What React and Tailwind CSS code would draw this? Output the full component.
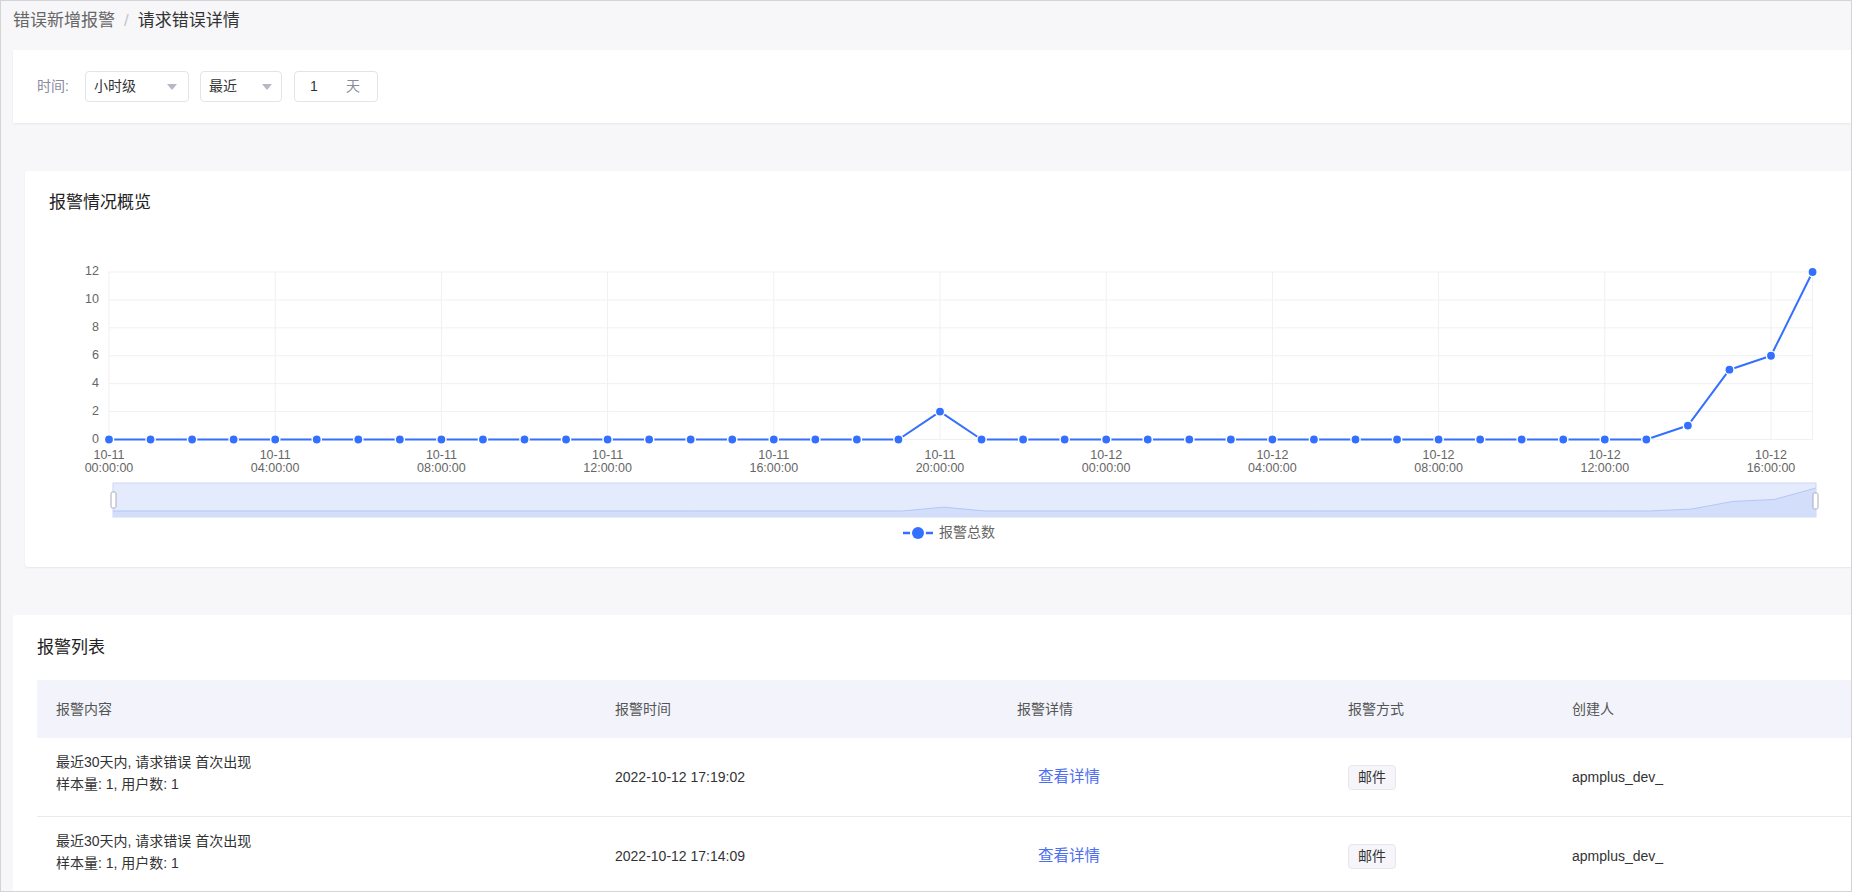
import React from 'react';

// 每小时报警数 (10-11 00:00 ~ 10-12 17:00)
const values = [
  ...Array(20).fill(0), 2,
  ...Array(17).fill(0), 1, 5, 6, 12,
];

const X0 = 84;
const STEP = 41.55;
const Y0 = 204.5;
const UNIT = 13.96;
const px = (i) => X0 + i * STEP;
const py = (v) => Y0 - v * UNIT;
const X1 = px(values.length - 1);

const pad = (n) => String(n).padStart(2, '0');

const Arrow = () => (
  <svg width="10" height="6" viewBox="0 0 10 6">
    <path d="M0 0 L10 0 L5 6 Z" fill="#b7b7c6" />
  </svg>
);

const Filters = () => (
  <div className="ml-[12px] h-[73px] bg-white shadow-[0_1px_2px_rgba(0,0,0,0.07)] flex items-center pl-[24px] text-[14px]">
    <span className="w-[48px] text-[#8a8a9c]">时间:</span>
    <div className="w-[104px] h-[31px] border border-[#e3e3ec] rounded-[4px] flex items-center justify-between pl-[8px] pr-[11px] text-[#333]">
      <span>小时级</span>
      <Arrow />
    </div>
    <div className="ml-[11px] w-[82px] h-[31px] border border-[#e3e3ec] rounded-[4px] flex items-center justify-between pl-[8px] pr-[9px] text-[#333]">
      <span>最近</span>
      <Arrow />
    </div>
    <div className="ml-[12px] w-[84px] h-[31px] border border-[#e3e3ec] rounded-[4px] flex items-center pl-[15px] text-[#333]">
      <span className="w-[36px]">1</span>
      <span className="text-[#8a8a9c]">天</span>
    </div>
  </div>
);

const Chart = () => {
  const line = values.map((v, i) => `${i ? 'L' : 'M'}${px(i)} ${py(v)}`).join(' ');
  // 缩略区域
  const zx0 = 88, zx1 = 1791, zy0 = 248, zy1 = 282, zBase = 276, zUnit = 1.92;
  const zStep = (zx1 - zx0) / (values.length - 1);
  const zLine = values.map((v, i) => `${i ? 'L' : 'M'}${zx0 + i * zStep} ${zBase - v * zUnit}`).join(' ');
  const zArea = `${zLine} L${zx1} ${zy1} L${zx0} ${zy1} Z`;
  const font = 'Liberation Sans, Noto Sans CJK SC, sans-serif';

  return (
    <svg width="1826" height="332" viewBox="0 0 1826 332" fontFamily={font}>
      {/* 网格 */}
      {[0, 2, 4, 6, 8, 10, 12].map((v) => (
        <g key={v}>
          <line x1={X0} y1={py(v)} x2={X1} y2={py(v)} stroke="#f0f0f3" strokeWidth="1" />
          <text x="74" y={py(v)} textAnchor="end" dominantBaseline="middle" fontSize="12.5" fill="#666">{v}</text>
        </g>
      ))}
      {Array.from({ length: 11 }).map((_, k) => {
        const h = k * 4;
        const x = px(h);
        return (
          <g key={k}>
            <line x1={x} y1={py(12)} x2={x} y2={Y0} stroke="#f0f0f3" strokeWidth="1" />
            <text x={x} y="221" textAnchor="middle" dominantBaseline="middle" fontSize="12.5" fill="#666">{h < 24 ? '10-11' : '10-12'}</text>
            <text x={x} y="234" textAnchor="middle" dominantBaseline="middle" fontSize="12.5" fill="#666">{`${pad(h % 24)}:00:00`}</text>
          </g>
        );
      })}
      <line x1={X1} y1={py(12)} x2={X1} y2={Y0} stroke="#f0f0f3" strokeWidth="1" />

      {/* 折线 */}
      <path d={line} fill="none" stroke="#3370ff" strokeWidth="2" strokeLinejoin="round" />
      {values.map((v, i) => (
        <circle key={i} cx={px(i)} cy={py(v)} r="4.6" fill="#3370ff" stroke="#fff" strokeWidth="1.4" />
      ))}

      {/* dataZoom */}
      <rect x={zx0} y={zy0} width={zx1 - zx0} height={zy1 - zy0} fill="#e4ebfc" stroke="#cbd7f6" strokeWidth="1" />
      <path d={zArea} fill="#d3defa" />
      <path d={zLine} fill="none" stroke="#b3c7f5" strokeWidth="1" />
      <rect x="86" y="257" width="5" height="16" rx="1.5" fill="#fff" stroke="#a6acc2" strokeWidth="1" />
      <rect x="1788" y="258" width="5" height="16" rx="1.5" fill="#fff" stroke="#a6acc2" strokeWidth="1" />

      {/* 图例 */}
      <line x1="878" y1="298" x2="908" y2="298" stroke="#3370ff" strokeWidth="2.5" />
      <circle cx="893" cy="298" r="8" fill="#fff" />
      <circle cx="893" cy="298" r="6" fill="#3370ff" />
      <text x="914" y="298" dominantBaseline="middle" fontSize="14" fill="#666">报警总数</text>
    </svg>
  );
};

const rows = [
  { time: '2022-10-12 17:19:02' },
  { time: '2022-10-12 17:14:09' },
];

const cols = 'grid grid-cols-[559px_402px_331px_224px_1fr]';

const AlarmTable = () => (
  <div className="ml-[24px]">
    <div className={`${cols} h-[58px] bg-[#f3f4fb] items-center text-[14px] text-[#555]`}>
      <div className="pl-[19px]">报警内容</div>
      <div className="pl-[19px]">报警时间</div>
      <div className="pl-[19px]">报警详情</div>
      <div className="pl-[19px]">报警方式</div>
      <div className="pl-[19px]">创建人</div>
    </div>
    {rows.map((r, i) => (
      <div key={i} className={`${cols} h-[79px] items-center border-b border-[#e9e9ef] text-[14px] text-[#333]`}>
        <div className="pl-[19px] pb-[8px] leading-[22px]">
          <div>最近30天内, 请求错误 首次出现</div>
          <div>样本量: 1, 用户数: 1</div>
        </div>
        <div className="pl-[19px]">{r.time}</div>
        <div className="pl-[40px] text-[15.5px] text-[#4e6ef2]">查看详情</div>
        <div className="pl-[19px]">
          <span className="inline-flex items-center h-[25px] px-[9px] border border-[#e6e6ef] bg-[#f6f6fa] rounded-[4px] text-[14px]">邮件</span>
        </div>
        <div className="pl-[19px]">apmplus_dev_</div>
      </div>
    ))}
  </div>
);

export default function App() {
  return (
    <div className="w-[1852px] h-[892px] overflow-hidden border border-[#d4d4d8] bg-[#f7f7fa] font-['Liberation_Sans','Noto_Sans_CJK_SC',sans-serif]">
      <div className="h-[49px] pt-[8px] pl-[12px] text-[17px] leading-[24px] flex items-start">
        <span className="text-[#666]">错误新增报警</span>
        <span className="mx-[9px] text-[#c4c4cc]">/</span>
        <span className="text-[#333]">请求错误详情</span>
      </div>

      <Filters />

      <div className="mt-[48px] ml-[24px] h-[396px] bg-white shadow-[0_1px_2px_rgba(0,0,0,0.07)] rounded-l-[3px]">
        <div className="h-[64px] flex items-center pl-[24px] text-[17px] text-[#222]">报警情况概览</div>
        <Chart />
      </div>

      <div className="mt-[48px] ml-[12px] bg-white rounded-tl-[3px] pb-[20px]">
        <div className="h-[65px] flex items-center pl-[24px] text-[17px] text-[#222]">报警列表</div>
        <AlarmTable />
      </div>
    </div>
  );
}
